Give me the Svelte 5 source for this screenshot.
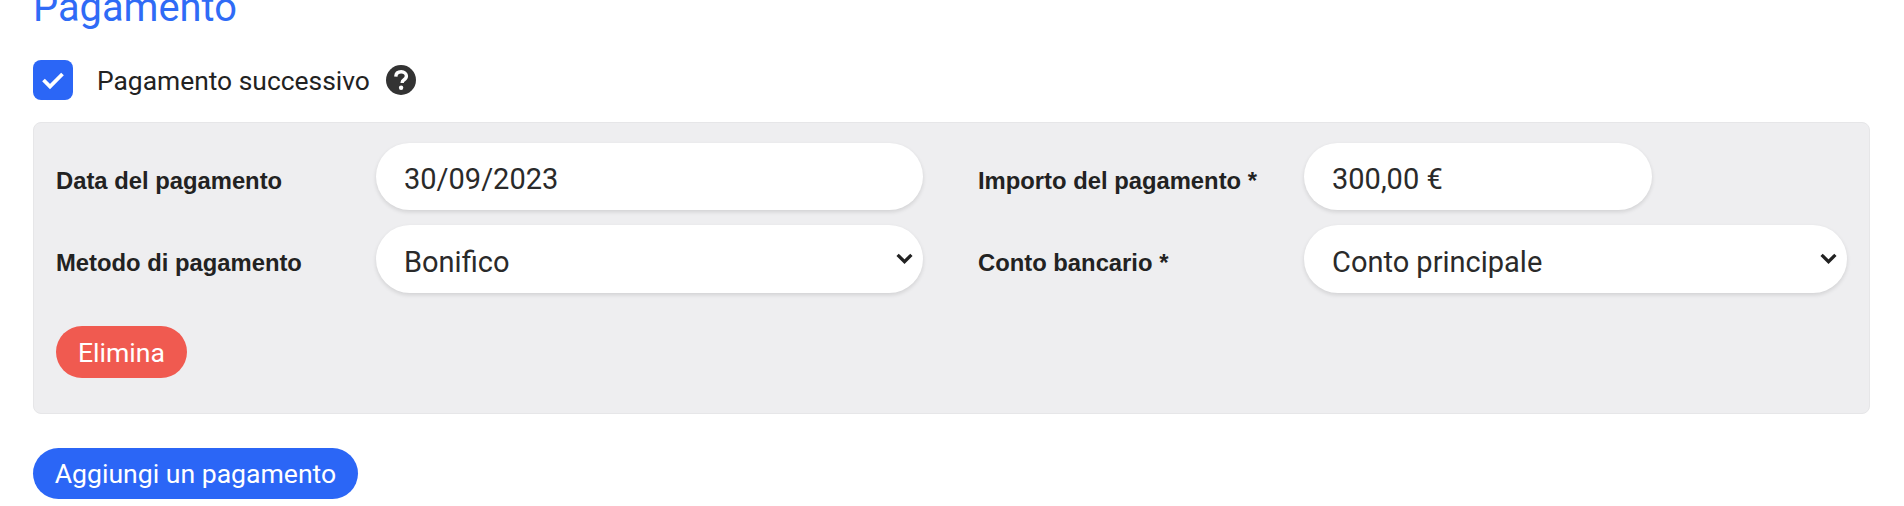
<script>
	let successivo = $state(true);
	let data = $state('30/09/2023');
	let importo = $state('300,00 €');
	let metodo = $state('Bonifico');
	let conto = $state('Conto principale');
</script>

<main class="page">
	<h2>Pagamento</h2>

	<div class="check-row">
		<label class="check">
			<input type="checkbox" bind:checked={successivo} />
			<span class="box">
				<svg viewBox="0 0 40 40" width="40" height="40" aria-hidden="true">
					<path d="M10.500 20l6.500 6.500L29.500 14" fill="none" stroke="#fff" stroke-width="3.800" />
				</svg>
			</span>
			<span class="check-text">Pagamento successivo</span>
		</label>
		<svg class="help" viewBox="0 0 30 30" width="30" height="30" aria-hidden="true">
			<circle cx="15" cy="15" r="15" fill="#333" />
			<path d="M9.800 11.600c.2-3 2.400-4.800 5.400-4.800 3 0 5.200 1.800 5.200 4.300 0 2-1.200 3-2.600 3.900-1.200.8-1.600 1.300-1.600 2.600v.4" fill="none" stroke="#fff" stroke-width="3.400" />
			<circle cx="15.100" cy="22.800" r="2.200" fill="#fff" />
		</svg>
	</div>

	<section class="panel">
		<div class="grid">
			<label for="data">Data del pagamento</label>
			<input id="data" class="field" bind:value={data} />
			<label for="importo">Importo del pagamento *</label>
			<input id="importo" class="field short" bind:value={importo} />

			<label for="metodo">Metodo di pagamento</label>
			<div class="select-wrap">
				<select id="metodo" class="field" bind:value={metodo}>
					<option>Bonifico</option>
					<option>Contanti</option>
					<option>Carta di credito</option>
				</select>
				<svg class="chevron" viewBox="0 0 16 10" width="17" height="11" aria-hidden="true">
					<path d="M1.500 1.500L8 8l6.500-6.500" fill="none" stroke="#222" stroke-width="3" />
				</svg>
			</div>
			<label for="conto">Conto bancario *</label>
			<div class="select-wrap">
				<select id="conto" class="field" bind:value={conto}>
					<option>Conto principale</option>
					<option>Conto secondario</option>
				</select>
				<svg class="chevron" viewBox="0 0 16 10" width="17" height="11" aria-hidden="true">
					<path d="M1.500 1.500L8 8l6.500-6.500" fill="none" stroke="#222" stroke-width="3" />
				</svg>
			</div>
		</div>
		<button class="btn danger">Elimina</button>
	</section>

	<button class="btn primary">Aggiungi un pagamento</button>
</main>

<style>
	:global(body) {
		background: #fff;
		color: #222;
		font-family: Roboto, "Liberation Sans", sans-serif;
		overflow: hidden;
	}

	.page {
		padding: 0 34px 0 33px;
	}

	h2 {
		margin: -16px 0 0;
		font-size: 39.800px;
		line-height: 48px;
		font-weight: 400;
		color: #2f6bf6;
	}

	.check-row {
		display: flex;
		align-items: center;
		margin-top: 28px;
		height: 40px;
	}

	.check {
		display: flex;
		align-items: center;
		cursor: pointer;
	}

	.check input {
		display: none;
	}

	.box {
		width: 40px;
		height: 40px;
		border-radius: 8px;
		background: #2b66f6;
		display: block;
	}

	.box svg {
		display: block;
	}

	.check-text {
		margin-left: 24px;
		font-size: 26.400px;
		position: relative;
		top: 1px;
	}

	.help {
		margin-left: 16px;
	}

	.panel {
		margin-top: 22px;
		height: 292px;
		box-sizing: border-box;
		padding: 20px 22px 0;
		background: #eeeef0;
		border: 1px solid #e6e6e8;
		border-radius: 8px;
	}

	.grid {
		display: grid;
		grid-template-columns: 320px 547px 381px 543px;
		row-gap: 15px;
		align-items: center;
	}

	.grid label {
		font-family: "Liberation Sans", Arial, sans-serif;
		font-size: 23.800px;
		font-weight: 700;
		color: #222;
		position: relative;
		top: 4px;
	}

	.grid label:nth-of-type(even) {
		margin-left: 55px;
	}

	.field {
		width: 100%;
		box-sizing: border-box;
		height: 67px;
		padding: 4px 28px 0;
		border: 0;
		border-radius: 34px;
		background: #fff;
		box-shadow: 0 2px 4px rgba(0, 0, 0, 0.12);
		font-family: Roboto, "Liberation Sans", sans-serif;
		font-size: 29px;
		color: #2a2a2a;
		outline: none;
		appearance: none;
	}

	.short {
		width: 348px;
	}

	.select-wrap {
		position: relative;
	}

	.select-wrap select {
		height: 68px;
		padding-top: 6px;
		display: block;
	}

	.chevron {
		position: absolute;
		right: 10px;
		top: 28px;
		pointer-events: none;
	}

	.btn {
		display: block;
		border: 0;
		padding: 0;
		color: #fff;
		font-family: Roboto, "Liberation Sans", sans-serif;
		font-size: 26.600px;
		cursor: pointer;
	}

	.danger {
		margin-top: 33px;
		width: 131px;
		height: 52px;
		border-radius: 27px;
		background: #f05a50;
	}

	.primary {
		margin-top: 34px;
		width: 325px;
		height: 51px;
		border-radius: 26px;
		background: #2b66f6;
	}
</style>
